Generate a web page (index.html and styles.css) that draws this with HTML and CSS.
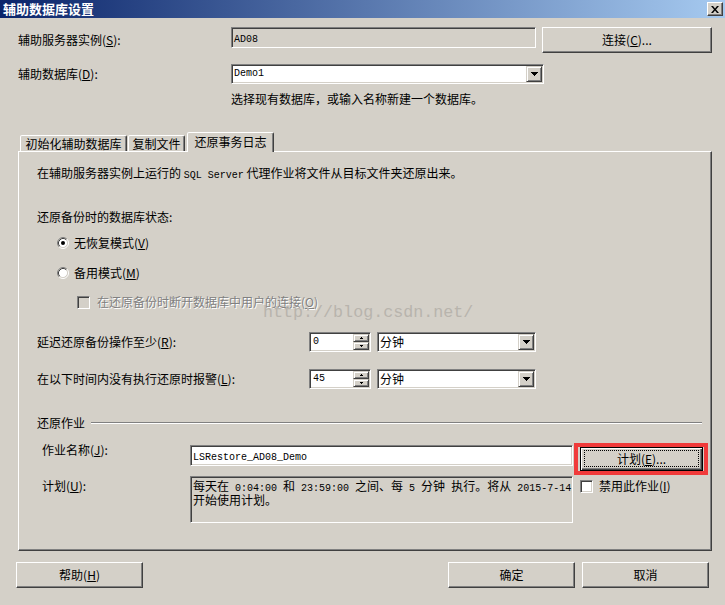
FILE: index.html
```html
<!DOCTYPE html>
<html lang="zh-CN">
<head>
<meta charset="utf-8">
<title>辅助数据库设置</title>
<link rel="stylesheet" href="styles.css">
</head>
<body>
<div class="window">
  <div class="titlebar">
    <span class="title">辅助数据库设置</span>
    <span class="close-btn"><svg width="8" height="7" viewBox="0 0 8 7"><path d="M0 0h2l2 2.4L6 0h2L5 3.5 8 7H6L4 4.6 2 7H0l3-3.5z" fill="#000"/></svg></span>
  </div>

  <div class="top">
    <div class="row r1">
      <span class="lbl-top">辅助服务器实例(<u>S</u>):</span>
      <div class="field field-ro"><span class="m">AD08</span></div>
      <button class="btn btn-connect">连接(<u>C</u>)...</button>
    </div>
    <div class="row r2">
      <span class="lbl-top">辅助数据库(<u>D</u>):</span>
      <div class="combo combo-db"><span class="m">Demo1</span><span class="dd"><svg width="7" height="4" viewBox="0 0 7 4"><path d="M0 0h7v1H0zM1 1h5v1H1zM2 2h3v1H2zM3 3h1v1H3z" fill="#000"/></svg></span></div>
    </div>
    <div class="hint">选择现有数据库，或输入名称新建一个数据库。</div>
  </div>

  <div class="tabs">
    <div class="tab tab1">初始化辅助数据库</div>
    <div class="tab tab2">复制文件</div>
    <div class="tab tab3">还原事务日志</div>
  </div>

  <div class="panel">
    <div class="line intro">在辅助服务器实例上运行的 <span class="m">SQL Server</span> 代理作业将文件从目标文件夹还原出来。</div>
    <div class="line state">还原备份时的数据库状态:</div>

    <div class="opt radio-row r-first">
      <svg class="radio" width="12" height="12" viewBox="0 0 12 12">
        <circle cx="6" cy="6" r="4.5" fill="#fff"/>
        <path d="M2.11 9.89A5.5 5.5 0 0 1 9.89 2.11" stroke="#808080" fill="none"/>
        <path d="M9.89 2.11A5.5 5.5 0 0 1 2.11 9.89" stroke="#fff" fill="none"/>
        <path d="M2.82 9.18A4.5 4.5 0 0 1 9.18 2.82" stroke="#404040" fill="none"/>
        <path d="M9.18 2.82A4.5 4.5 0 0 1 2.82 9.18" stroke="#d4d0c8" fill="none"/>
        <circle cx="6" cy="6" r="2" fill="#000"/>
      </svg>
      <span class="opt-text">无恢复模式(<u>V</u>)</span>
    </div>
    <div class="opt radio-row r-second">
      <svg class="radio" width="12" height="12" viewBox="0 0 12 12">
        <circle cx="6" cy="6" r="4.5" fill="#fff"/>
        <path d="M2.11 9.89A5.5 5.5 0 0 1 9.89 2.11" stroke="#808080" fill="none"/>
        <path d="M9.89 2.11A5.5 5.5 0 0 1 2.11 9.89" stroke="#fff" fill="none"/>
        <path d="M2.82 9.18A4.5 4.5 0 0 1 9.18 2.82" stroke="#404040" fill="none"/>
        <path d="M9.18 2.82A4.5 4.5 0 0 1 2.82 9.18" stroke="#d4d0c8" fill="none"/>
      </svg>
      <span class="opt-text">备用模式(<u>M</u>)</span>
    </div>
    <div class="opt check-row">
      <span class="checkbox disabled"></span>
      <span class="check-text disabled-text">在还原备份时断开数据库中用户的连接(<u>O</u>)</span>
    </div>

    <div class="row unit-row delay">
      <span class="lbl-unit">延迟还原备份操作至少(<u>R</u>):</span>
      <div class="spin"><span class="m spin-val">0</span><span class="spin-btns"><span class="sb"><svg width="3" height="2" viewBox="0 0 3 2"><path d="M1 0h1v1H1zM0 1h3v1H0z" fill="#000"/></svg></span><span class="sb"><svg width="3" height="2" viewBox="0 0 3 2"><path d="M0 0h3v1H0zM1 1h1v1H1z" fill="#000"/></svg></span></span></div>
      <div class="combo combo-unit"><span>分钟</span><span class="dd"><svg width="7" height="4" viewBox="0 0 7 4"><path d="M0 0h7v1H0zM1 1h5v1H1zM2 2h3v1H2zM3 3h1v1H3z" fill="#000"/></svg></span></div>
    </div>
    <div class="row unit-row alarm">
      <span class="lbl-unit">在以下时间内没有执行还原时报警(<u>L</u>):</span>
      <div class="spin"><span class="m spin-val">45</span><span class="spin-btns"><span class="sb"><svg width="3" height="2" viewBox="0 0 3 2"><path d="M1 0h1v1H1zM0 1h3v1H0z" fill="#000"/></svg></span><span class="sb"><svg width="3" height="2" viewBox="0 0 3 2"><path d="M0 0h3v1H0zM1 1h1v1H1z" fill="#000"/></svg></span></span></div>
      <div class="combo combo-unit"><span>分钟</span><span class="dd"><svg width="7" height="4" viewBox="0 0 7 4"><path d="M0 0h7v1H0zM1 1h5v1H1zM2 2h3v1H2zM3 3h1v1H3z" fill="#000"/></svg></span></div>
    </div>

    <div class="group-head"><span>还原作业</span><span class="etch"></span></div>

    <div class="row job-row">
      <span class="lbl-job">作业名称(<u>J</u>):</span>
      <div class="field field-job"><span class="m">LSRestore_AD08_Demo</span></div>
      <div class="highlight"><button class="btn btn-default"><span class="focus">计划(<u>E</u>)...</span></button></div>
    </div>
    <div class="row sched-row">
      <span class="lbl-job lbl-sched">计划(<u>U</u>):</span>
      <div class="field field-sched"><div class="sched-line">每天在<span class="m"> 0:04:00 </span>和<span class="m"> 23:59:00 </span>之间、每<span class="m"> 5 </span>分钟<span class="m"> </span>执行。将从<span class="m"> 2015-7-14</span></div><div class="sched-line">开始使用计划。</div></div>
      <div class="disable-job"><span class="checkbox"></span><span class="check-text2">禁用此作业(<u>I</u>)</span></div>
    </div>

    <div class="watermark">http://blog.csdn.net/</div>
  </div>

  <div class="footer">
    <button class="btn btn-foot">帮助(<u>H</u>)</button>
    <button class="btn btn-foot btn-ok">确定</button>
    <button class="btn btn-foot">取消</button>
  </div>
</div>
</body>
</html>
```

FILE: styles.css
```css
* { box-sizing: border-box; }
html, body { margin: 0; padding: 0; }
body {
  width: 725px;
  height: 605px;
  overflow: hidden;
  background: #d4d0c8;
  color: #000;
  font-family: "Noto Sans CJK SC", "Noto Sans CJK JP", sans-serif;
  font-size: 12px;
  line-height: 14px;
}
u { text-decoration: underline; text-underline-offset: 1px; }
.m {
  font-family: "Liberation Mono", "Noto Sans CJK SC", monospace;
  font-size: 10px;
}

/* title bar */
.titlebar {
  height: 18px;
  background: linear-gradient(to right, #0a246a, #a6caf0);
  display: flex;
  align-items: center;
  justify-content: space-between;
  padding: 0 2px 0 3px;
}
.title { color: #fff; font-weight: bold; font-size: 13px; line-height: 16px; }
.close-btn {
  width: 16px;
  height: 14px;
  background: #d4d0c8;
  border: 1px solid;
  border-color: #fff #404040 #404040 #fff;
  box-shadow: inset -1px -1px #808080;
  display: flex;
  align-items: center;
  justify-content: center;
}

/* generic controls */
.row { display: flex; align-items: center; }
.btn {
  background: #d4d0c8;
  border: 1px solid;
  border-color: #fff #404040 #404040 #fff;
  box-shadow: inset -1px -1px #808080;
  font: inherit;
  color: #000;
  padding: 0;
  display: flex;
  align-items: center;
  justify-content: center;
}
.field {
  border: 1px solid;
  border-color: #808080 #fff #fff #808080;
  box-shadow: inset 1px 1px #404040, inset -1px -1px #d4d0c8;
  background: #fff;
}
.combo {
  height: 20px;
  background: #fff;
  border: 1px solid;
  border-color: #808080 #fff #fff #808080;
  box-shadow: inset 1px 1px #404040, inset -1px -1px #d4d0c8;
  padding: 1px;
  display: flex;
  align-items: center;
  justify-content: space-between;
}
.combo > span:first-child { padding-left: 1px; }
.dd {
  width: 16px;
  height: 16px;
  background: #d4d0c8;
  border: 1px solid;
  border-color: #d4d0c8 #404040 #404040 #d4d0c8;
  box-shadow: inset 1px 1px #fff, inset -1px -1px #808080;
  display: flex;
  align-items: center;
  justify-content: center;
}

/* top section */
.top { padding-left: 18px; }
.r1 { margin-top: 9px; height: 26px; }
.lbl-top { width: 213px; }
.field-ro {
  width: 305px;
  height: 21px;
  align-self: flex-start;
  background: #d4d0c8;
  padding: 2px 2px;
}
.btn-connect { width: 170px; height: 26px; margin-left: 6px; }
.r2 { margin-top: 11px; height: 20px; }
.combo-db { width: 313px; }
.hint { margin: 8px 0 0 213px; }

/* tabs */
.tabs {
  margin: 26px 0 0 20px;
  height: 19px;
  display: flex;
  align-items: flex-end;
  position: relative;
  z-index: 1;
}
.tab {
  height: 16px;
  background: #d4d0c8;
  border: 1px solid;
  border-bottom: none;
  border-color: #fff #404040 transparent #fff;
  box-shadow: inset -1px 0 #808080;
  border-radius: 2px 2px 0 0;
  display: flex;
  align-items: center;
  justify-content: center;
}
.tab1 { width: 107px; }
.tab2 { width: 57px; margin-left: 1px; }
.tab3 { width: 87px; height: 20px; margin-left: 2px; margin-bottom: -1px; padding-bottom: 1px; }

/* panel */
.panel {
  position: relative;
  margin-left: 18px;
  width: 694px;
  height: 400px;
  border: 1px solid;
  border-color: #fff #404040 #404040 #fff;
  box-shadow: inset -1px -1px #808080;
  padding: 14px 0 0 18px;
}
.line { height: 14px; }
.state { margin-top: 30px; }
.opt { display: flex; align-items: center; height: 14px; }
.radio-row { padding-left: 20px; }
.r-first { margin-top: 12px; }
.r-second { margin-top: 16px; }
.opt-text { margin-left: 5px; }
.check-row { margin-top: 15px; padding-left: 40px; }
.checkbox {
  width: 13px;
  height: 13px;
  flex: none;
  background: #fff;
  border: 1px solid;
  border-color: #808080 #fff #fff #808080;
  box-shadow: inset 1px 1px #404040, inset -1px -1px #d4d0c8;
}
.checkbox.disabled { background: #d4d0c8; }
.check-text { margin-left: 7px; }
.disabled-text { color: #808080; text-shadow: 1px 1px #fff; }

.unit-row { height: 20px; }
.delay { margin-top: 23px; }
.alarm { margin-top: 17px; }
.lbl-unit { width: 272px; }
.spin {
  width: 62px;
  height: 20px;
  background: #fff;
  border: 1px solid;
  border-color: #808080 #fff #fff #808080;
  box-shadow: inset 1px 1px #404040, inset -1px -1px #d4d0c8;
  padding: 1px;
  display: flex;
  justify-content: space-between;
}
.spin-val { padding-left: 2px; line-height: 16px; }
.spin-btns { width: 16px; display: flex; flex-direction: column; }
.sb {
  height: 8px;
  background: #d4d0c8;
  border: 1px solid;
  border-color: #d4d0c8 #404040 #404040 #d4d0c8;
  box-shadow: inset 1px 1px #fff, inset -1px -1px #808080;
  display: flex;
  align-items: center;
  justify-content: center;
}
.combo-unit { width: 159px; margin-left: 6px; }

.group-head {
  margin-top: 27px;
  height: 14px;
  display: flex;
  align-items: center;
}
.etch {
  flex: 1;
  height: 2px;
  margin: 0 9px 0 6px;
  border-top: 1px solid #808080;
  border-bottom: 1px solid #fff;
}

.job-row { margin-top: 13px; height: 32px; align-items: flex-start; }
.lbl-job { width: 153px; padding-left: 5px; }
.field-job {
  width: 383px;
  height: 21px;
  margin-top: 2px;
  padding: 2px 2px;
}
.highlight {
  width: 134px;
  height: 32px;
  margin-left: 1px;
  border: 4px solid #f03a3a;
  padding: 0 1px 0 2px;
  display: flex;
}
.btn-default {
  flex: 1;
  border: 1px solid #000;
  box-shadow: inset 1px 1px #fff, inset -1px -1px #404040, inset -2px -2px #808080;
  align-items: stretch;
  justify-content: stretch;
  display: flex;
}
.focus {
  flex: 1;
  margin: 2px 3px 3px 3px;
  border: 1px dotted #000;
  display: flex;
  align-items: center;
  justify-content: center;
}

.sched-row { margin-top: 1px; align-items: flex-start; }
.lbl-sched { margin-top: 3px; }
.field-sched {
  width: 383px;
  height: 47px;
  background: #d4d0c8;
  padding: 2px 1px 0 2px;
  overflow: hidden;
}
.sched-line { height: 14px; line-height: 14px; white-space: nowrap; }
.disable-job {
  margin: 3px 0 0 7px;
  height: 14px;
  display: flex;
  align-items: center;
}
.check-text2 { margin-left: 6px; }

.watermark {
  position: absolute;
  left: 244px;
  top: 151px;
  font-family: "Liberation Mono", monospace;
  font-size: 16.7px;
  line-height: 20px;
  color: #b8b4ad;
  white-space: nowrap;
}

/* footer */
.footer {
  margin-top: 11px;
  padding: 0 16px;
  display: flex;
  gap: 7px;
}
.btn-foot { width: 127px; height: 26px; }
.btn-ok { margin-left: auto; }
```
